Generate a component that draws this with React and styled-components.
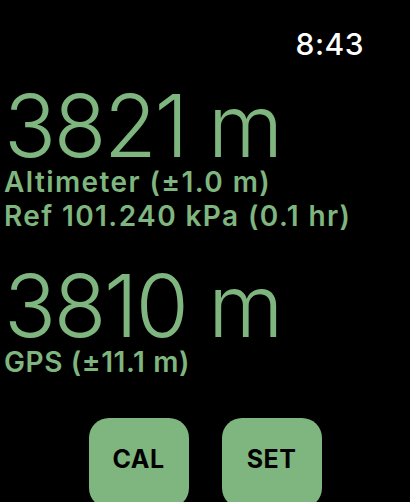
import styled, { createGlobalStyle } from "styled-components";

// 고도계 화면 (시계 앱 스타일)

const GlobalStyle = createGlobalStyle`
  html, body {
    margin: 0;
    padding: 0;
    background: #000;
  }
`;

const GREEN = "#7fb67f";

const Screen = styled.div`
  width: 410px;
  height: 502px;
  overflow: hidden;
  background: #000;
  font-family: Inter, "Noto Sans", sans-serif;
  display: flex;
  flex-direction: column;
`;

// 상단 시간
const StatusBar = styled.div`
  display: flex;
  justify-content: flex-end;
  padding: 26px 46px 0 0;
  height: 44px;
  box-sizing: border-box;
`;

const Clock = styled.span`
  color: #fff;
  font-size: 30px;
  font-weight: 500;
  line-height: 36px;
  letter-spacing: 0.5px;
`;

const Readings = styled.div`
  display: flex;
  flex-direction: column;
  padding-left: 4px;
  margin-top: 43px;
`;

const Reading = styled.div`
  display: flex;
  flex-direction: column;
  margin-bottom: ${(p) => p.$gap || 0}px;
`;

// 큰 고도 숫자
const Value = styled.div`
  color: ${GREEN};
  font-size: 86px;
  font-weight: 300;
  line-height: 78px;
  letter-spacing: -2.3px;
`;

const Label = styled.div`
  color: ${GREEN};
  font-size: 28px;
  font-weight: 600;
  line-height: 34px;
  letter-spacing: ${(p) => (p.$tight ? 0.6 : 1.4)}px;
`;

const Buttons = styled.div`
  display: flex;
  justify-content: center;
  gap: 33px;
  margin-top: auto;
  margin-bottom: -6px;
`;

const Button = styled.button`
  width: 100px;
  height: 90px;
  border: none;
  border-radius: 20px;
  background: ${GREEN};
  color: #000;
  font-family: Inter, "Noto Sans", sans-serif;
  font-size: 25px;
  font-weight: 700;
  letter-spacing: 0.5px;
  padding: 0 0 8px;
`;

const App = () => {
  return (
    <Screen>
      <GlobalStyle />
      <StatusBar>
        <Clock>8:43</Clock>
      </StatusBar>
      <Readings>
        <Reading $gap={34}>
          <Value>3821 m</Value>
          <Label>Altimeter (±1.0 m)</Label>
          <Label>Ref 101.240 kPa (0.1 hr)</Label>
        </Reading>
        <Reading>
          <Value>3810 m</Value>
          <Label $tight>GPS (±11.1 m)</Label>
        </Reading>
      </Readings>
      <Buttons>
        <Button>CAL</Button>
        <Button>SET</Button>
      </Buttons>
    </Screen>
  );
};

export default App;
